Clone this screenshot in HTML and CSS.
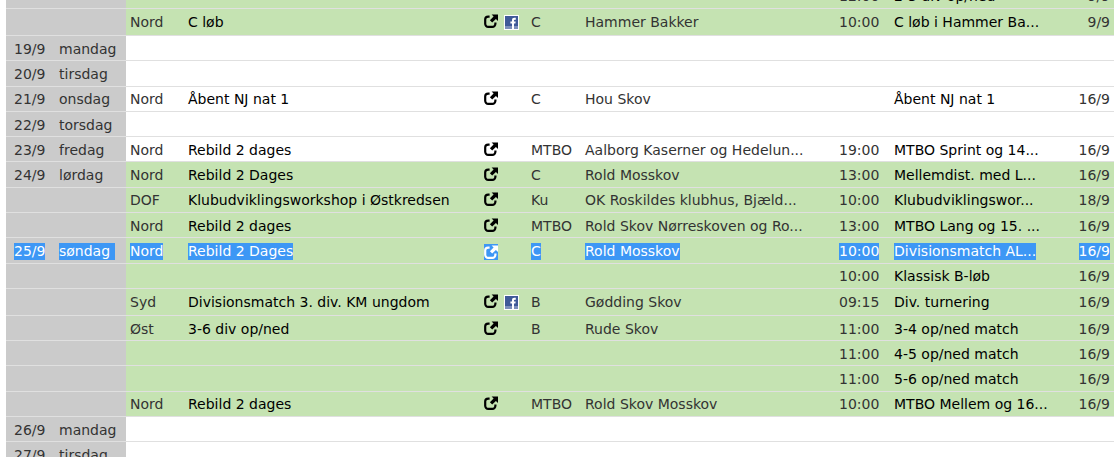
FILE: index.html
```html
<!DOCTYPE html>
<html lang="da">
<head>
<meta charset="utf-8">
<title>Kalender</title>
<link rel="stylesheet" href="styles.css">
</head>
<body>
<svg class="defs" width="0" height="0" aria-hidden="true">
  <symbol id="ext" viewBox="0 0 14 14">
    <path d="M5.6 2.6H4.2A3 3 0 0 0 1.2 5.6V9.8A3 3 0 0 0 4.2 12.8H8.4A3 3 0 0 0 11.4 9.8V8.4" fill="none" stroke="currentColor" stroke-width="2.2"/>
    <path d="M7.6 0.5H14V6.9L11.9 4.9 8.2 8.6 5.9 6.3 9.6 2.6Z" fill="currentColor"/>
  </symbol>
  <symbol id="fb" viewBox="0 0 15 15">
    <rect x="0" y="0" width="15" height="15" fill="#fff"/>
    <rect x="1" y="1" width="13" height="13" fill="#3f5a98"/>
    <rect x="1" y="11" width="13" height="3" fill="#7c8fbb"/>
    <path d="M8 14V8.6H6.4V6.6H8V5.2C8 3.6 8.9 2.8 10.3 2.8H11.8V4.8H10.8C10.2 4.8 10 5.1 10 5.6V6.6H11.7L11.4 8.6H10V14Z" fill="#fff"/>
  </symbol>
</svg>
<table class="cal">
  <colgroup>
    <col class="c-date"><col class="c-day"><col class="c-reg"><col class="c-title"><col class="c-icons"><col class="c-type"><col class="c-place"><col class="c-time"><col class="c-desc"><col class="c-upd">
  </colgroup>
  <tbody>
    <tr class="h25 ev"><td class="g"></td><td class="g"></td><td></td><td></td><td></td><td></td><td></td><td class="mut">12:00</td><td>2-3 div op/ned</td><td class="upd">9/9</td></tr>
    <tr class="h27 ev"><td class="g"></td><td class="g"></td><td class="mut">Nord</td><td>C løb</td><td class="ic"><svg class="i-ext"><use href="#ext"/></svg><svg class="i-fb"><use href="#fb"/></svg></td><td class="mut">C</td><td class="mut">Hammer Bakker</td><td class="mut">10:00</td><td>C løb i Hammer Ba...</td><td class="upd">9/9</td></tr>
    <tr class="h25 lo"><td class="g">19/9</td><td class="g">mandag</td><td colspan="8"></td></tr>
    <tr class="h26"><td class="g">20/9</td><td class="g">tirsdag</td><td colspan="8"></td></tr>
    <tr class="h25"><td class="g">21/9</td><td class="g">onsdag</td><td class="mut">Nord</td><td>Åbent NJ nat 1</td><td class="ic"><svg class="i-ext"><use href="#ext"/></svg></td><td class="mut">C</td><td class="mut">Hou Skov</td><td class="mut"></td><td>Åbent NJ nat 1</td><td class="upd">16/9</td></tr>
    <tr class="h25 lo"><td class="g">22/9</td><td class="g">torsdag</td><td colspan="8"></td></tr>
    <tr class="h25 lo"><td class="g">23/9</td><td class="g">fredag</td><td class="mut">Nord</td><td>Rebild 2 dages</td><td class="ic"><svg class="i-ext"><use href="#ext"/></svg></td><td class="mut">MTBO</td><td class="mut">Aalborg Kaserner og Hedelun...</td><td class="mut">19:00</td><td>MTBO Sprint og 14...</td><td class="upd">16/9</td></tr>
    <tr class="h26 ev"><td class="g">24/9</td><td class="g">lørdag</td><td class="mut">Nord</td><td>Rebild 2 Dages</td><td class="ic"><svg class="i-ext"><use href="#ext"/></svg></td><td class="mut">C</td><td class="mut">Rold Mosskov</td><td class="mut">13:00</td><td>Mellemdist. med L...</td><td class="upd">16/9</td></tr>
    <tr class="h25 ev"><td class="g"></td><td class="g"></td><td class="mut">DOF</td><td>Klubudviklingsworkshop i Østkredsen</td><td class="ic"><svg class="i-ext"><use href="#ext"/></svg></td><td class="mut">Ku</td><td class="mut">OK Roskildes klubhus, Bjæld...</td><td class="mut">10:00</td><td>Klubudviklingswor...</td><td class="upd">18/9</td></tr>
    <tr class="h25 ev lo"><td class="g"></td><td class="g"></td><td class="mut">Nord</td><td>Rebild 2 dages</td><td class="ic"><svg class="i-ext"><use href="#ext"/></svg></td><td class="mut">MTBO</td><td class="mut">Rold Skov Nørreskoven og Ro...</td><td class="mut">13:00</td><td>MTBO Lang og 15. ...</td><td class="upd">16/9</td></tr>
    <tr class="h26 ev lo"><td class="g"><span class="sel">25/9</span></td><td class="g"><span class="sel sel-day">søndag</span></td><td><span class="sel">Nord</span></td><td><span class="sel">Rebild 2 Dages</span></td><td class="ic"><span class="sel sel-ic"><svg class="i-ext"><use href="#ext"/></svg></span></td><td><span class="sel">C</span></td><td><span class="sel">Rold Mosskov</span></td><td><span class="sel">10:00</span></td><td><span class="sel">Divisionsmatch AL...</span></td><td class="upd"><span class="sel">16/9</span></td></tr>
    <tr class="h25 ev"><td class="g"></td><td class="g"></td><td></td><td></td><td></td><td></td><td></td><td class="mut">10:00</td><td>Klassisk B-løb</td><td class="upd">16/9</td></tr>
    <tr class="h27 ev"><td class="g"></td><td class="g"></td><td class="mut">Syd</td><td>Divisionsmatch 3. div. KM ungdom</td><td class="ic"><svg class="i-ext"><use href="#ext"/></svg><svg class="i-fb"><use href="#fb"/></svg></td><td class="mut">B</td><td class="mut">Gødding Skov</td><td class="mut">09:15</td><td>Div. turnering</td><td class="upd">16/9</td></tr>
    <tr class="h25 ev lo"><td class="g"></td><td class="g"></td><td class="mut">Øst</td><td>3-6 div op/ned</td><td class="ic"><svg class="i-ext"><use href="#ext"/></svg></td><td class="mut">B</td><td class="mut">Rude Skov</td><td class="mut">11:00</td><td>3-4 op/ned match</td><td class="upd">16/9</td></tr>
    <tr class="h25 ev lo"><td class="g"></td><td class="g"></td><td></td><td></td><td></td><td></td><td></td><td class="mut">11:00</td><td>4-5 op/ned match</td><td class="upd">16/9</td></tr>
    <tr class="h26 ev"><td class="g"></td><td class="g"></td><td></td><td></td><td></td><td></td><td></td><td class="mut">11:00</td><td>5-6 op/ned match</td><td class="upd">16/9</td></tr>
    <tr class="h25 ev"><td class="g"></td><td class="g"></td><td class="mut">Nord</td><td>Rebild 2 dages</td><td class="ic"><svg class="i-ext"><use href="#ext"/></svg></td><td class="mut">MTBO</td><td class="mut">Rold Skov Mosskov</td><td class="mut">10:00</td><td>MTBO Mellem og 16...</td><td class="upd">16/9</td></tr>
    <tr class="h25 lo"><td class="g">26/9</td><td class="g">mandag</td><td colspan="8"></td></tr>
    <tr class="h25 lo"><td class="g">27/9</td><td class="g">tirsdag</td><td colspan="8"></td></tr>
  </tbody>
</table>
</body>
</html>
```
FILE: styles.css
```css
html, body {
  margin: 0;
  height: 457px;
  overflow: hidden;
  background: #fff;
}
.defs { position: absolute; }
.cal {
  border-collapse: separate;
  border-spacing: 0;
  table-layout: fixed;
  width: 1108px;
  margin: -16px 0 0 6px;
  font: 14px/16px "DejaVu Sans", Verdana, sans-serif;
  color: #000;
}
.c-date { width: 48px; }
.c-day { width: 72px; }
.c-reg { width: 58px; }
.c-title { width: 296px; }
.c-icons { width: 47px; }
.c-type { width: 54px; }
.c-place { width: 254px; }
.c-time { width: 55px; }
.c-desc { width: 170px; }
.c-upd { width: 54px; }
.cal td {
  box-sizing: border-box;
  padding: 0 0 0 4px;
  border-bottom: 1px solid #e0e0e0;
  white-space: nowrap;
  overflow: hidden;
  vertical-align: middle;
}
.cal td:first-child { padding-left: 8px; }
.cal td.g + td.g { padding-left: 5px; }
.h25 td { height: 25px; }
.h26 td { height: 26px; }
.h27 td { height: 27px; }
.cal .lo td { padding-top: 2px; }
.ev td { background: #c5e3b2; }
.cal td.g { background: #cbcbcb; color: #333; }
.cal td.mut { color: #333; }
.cal td.upd { text-align: right; padding-right: 4px; padding-left: 0; color: #333; }
.cal td.ic { line-height: 0; }
.i-ext {
  width: 14px;
  height: 14px;
  margin-bottom: 2px;
  color: #000;
  vertical-align: middle;
}
.i-fb {
  width: 15px;
  height: 15px;
  margin: 1px 0 0 6px;
  vertical-align: middle;
}
.sel {
  display: inline-block;
  background: #3d97f5;
  color: #fff;
  line-height: 17px;
}
.sel-day { padding-right: 5px; }
.sel-ic { line-height: 0; padding: 1px 0; }
.sel-ic .i-ext { color: #fff; margin-bottom: 0; }
```
